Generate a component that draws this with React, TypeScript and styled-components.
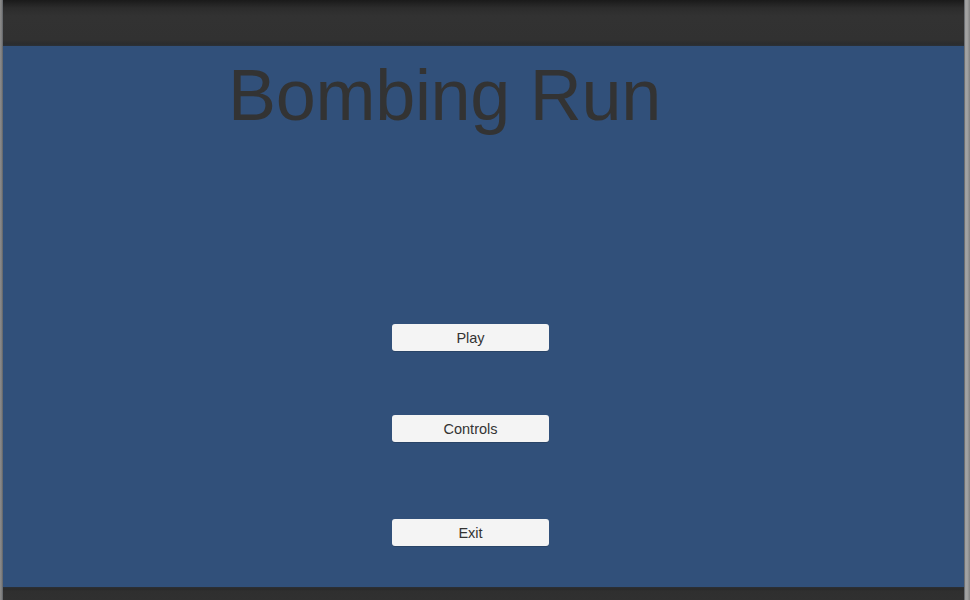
import React from 'react'
import styled, { createGlobalStyle } from 'styled-components'

const GlobalStyle = createGlobalStyle`
  html, body {
    margin: 0;
    padding: 0;
    height: 100%;
    background: #2f2f2f;
  }
  #root {
    height: 100%;
  }
`

export const Screen = styled.div`
  height: 100vh;
  width: 100%;
  display: flex;
  overflow: hidden;
`

export const Column = styled.div`
  flex: 1;
  display: flex;
  flex-direction: column;
`

export const TopBar = styled.header`
  height: 46px;
  flex: none;
  background: linear-gradient(180deg, #1a1a1a 0px, #2c2c2c 8px, #323232 16px, #313131 40px, #2a2c2e 44px, #2b3138 46px);
`

export const BottomBar = styled.footer`
  height: 13px;
  flex: none;
  background: linear-gradient(180deg, #2b3036 0px, #2a2a2a 2px, #2f2f2f 4px, #303030 100%);
`

export const Edge = styled.div<{ $right?: boolean }>`
  flex: none;
  width: ${(p) => (p.$right ? '6px' : '3px')};
  background: ${(p) =>
    p.$right
      ? 'linear-gradient(90deg, #3a3f47 0px, #9c9c9c 1px, #a5a5a5 3px, #808080 6px)'
      : 'linear-gradient(90deg, #8c8c8c 0px, #7a7a7a 2px, #555b63 3px)'};
`

export const Stage = styled.main`
  flex: 1;
  background: #31507a;
  display: flex;
  flex-direction: column;
`

export const Title = styled.h1`
  margin: 13px 0 0 225px;
  color: #333333;
  font: 400 72px/72px 'Liberation Sans', Arial, sans-serif;
  letter-spacing: -0.3px;
`

export const Menu = styled.nav`
  display: flex;
  flex-direction: column;
  align-items: center;
  padding-right: 26px;
`

export const MenuButton = styled.button<{ $top: number }>`
  margin-top: ${(p) => p.$top}px;
  width: 157px;
  height: 27px;
  padding: 0;
  border: none;
  border-radius: 3px;
  background: #f4f4f4;
  color: #333333;
  font: 400 14.5px 'Liberation Sans', Arial, sans-serif;
  box-shadow: 0 1px 0 rgba(0, 0, 0, 0.15);
  cursor: pointer;
`

const items = [
  { label: 'Play', top: 193 },
  { label: 'Controls', top: 64 },
  { label: 'Exit', top: 77 },
]

export default function App() {
  return (
    <Screen>
      <GlobalStyle />
      <Edge />
      <Column>
        <TopBar />
        <Stage>
          <Title>Bombing Run</Title>
          <Menu>
            {items.map((it) => (
              <MenuButton key={it.label} $top={it.top}>
                {it.label}
              </MenuButton>
            ))}
          </Menu>
        </Stage>
        <BottomBar />
      </Column>
      <Edge $right />
    </Screen>
  )
}
